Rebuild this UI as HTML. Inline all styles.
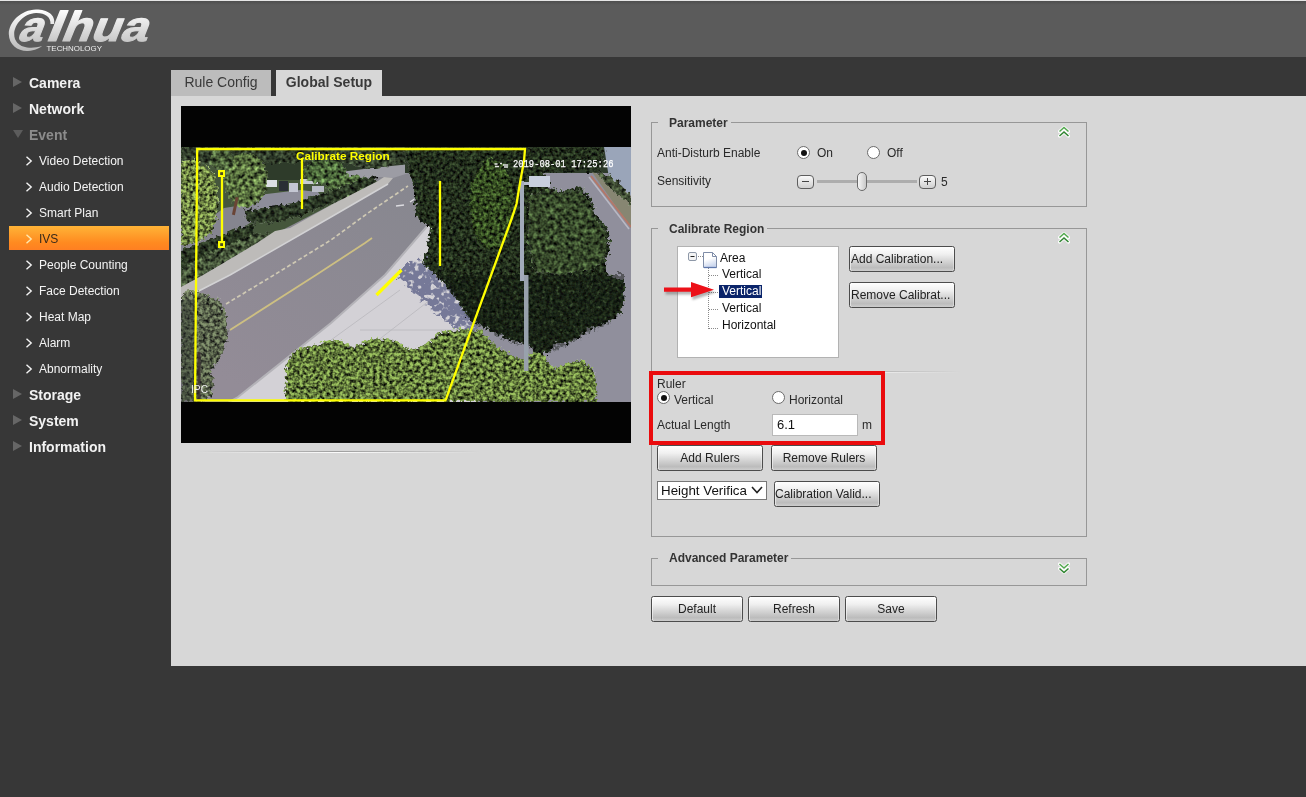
<!DOCTYPE html>
<html><head><meta charset="utf-8">
<style>
*{box-sizing:border-box;margin:0;padding:0}
html,body{width:1306px;height:797px;overflow:hidden;background:#373737;font-family:"Liberation Sans",sans-serif;font-size:12px;color:#222}
#hdr{position:absolute;left:0;top:0;width:1306px;height:57px;background:linear-gradient(#4e4e4e,#5b5b5b 4px);border-top:1px solid #e6e6e6}
#side{position:absolute;left:0;top:57px;width:171px;height:740px;background:#373737}
.m1{position:absolute;left:29px;font-size:14px;font-weight:bold;color:#f2f2f2;line-height:16px;white-space:nowrap}
.m1.dim{color:#8c8c8c}
.tri{position:absolute;left:13px;width:0;height:0;border-left:9px solid #666;border-top:5.5px solid transparent;border-bottom:5.5px solid transparent}
.trid{position:absolute;left:12.500px;width:0;height:0;border-top:8px solid #5c5c5c;border-left:5px solid transparent;border-right:5px solid transparent}
.m2{position:absolute;left:39px;font-size:12px;color:#f4f4f4;line-height:14px;white-space:nowrap}
.chev{position:absolute;left:25px;width:8px;height:10px}
#ivs{position:absolute;left:9px;top:169px;width:160px;height:24px;background:linear-gradient(#ffb437,#ff8a20 70%,#ff7f22)}
#content{position:absolute;left:171px;top:96px;width:1135px;height:570px;background:#d7d7d7}
.tab{position:absolute;top:70px;height:26px;font-size:15px;line-height:25px;text-align:center;color:#3a3a3a}
#video{position:absolute;left:181px;top:106px;width:450px;height:337px;background:#030303}
fieldset{position:absolute;border:1px solid #a9a9a9}
.leg{position:absolute;font-weight:bold;font-size:12px;color:#333;background:#d7d7d7;padding:0 3px 0 11px;line-height:14px;white-space:nowrap}
.lbl{position:absolute;font-size:12px;color:#2a2a2a;line-height:14px;white-space:nowrap}
.btn{position:absolute;height:25px;border:1px solid #4c4c4c;border-radius:2.5px;background:linear-gradient(#fefefe 0%,#f0f0f0 30%,#d8d8d8 55%,#bcbcbc 86%,#cdcdcd 100%);box-shadow:inset 1px 0 0 rgba(255,255,255,.55),inset -1px 0 0 rgba(255,255,255,.35);font-size:12px;line-height:24px;text-align:center;color:#222;white-space:nowrap;overflow:hidden}
.radio{position:absolute;width:13px;height:13px;border-radius:50%;border:1px solid #6b6b6b;background:#fff}
.radio.on:after{content:"";position:absolute;left:2.5px;top:2.5px;width:6px;height:6px;border-radius:50%;background:#111}

.fs{position:absolute;border:1px solid #979797}
.sbtn{position:absolute;width:17px;height:14px;border:1px solid #5e5e5e;border-radius:4px;background:linear-gradient(#fafafa,#cfcfcf)}
.sbtn i{position:absolute;background:#444}
.dchev{position:absolute}
.tl{position:absolute;font-size:12px;line-height:14px;color:#111;white-space:nowrap}
#wrap{position:absolute;left:0;top:0;width:1306px;height:797px;will-change:transform}
.hr{position:absolute;height:1px;background:linear-gradient(90deg,rgba(160,160,160,0),rgba(160,160,160,1) 50%,rgba(160,160,160,0))}
.hr.w{background:linear-gradient(90deg,rgba(255,255,255,0),rgba(255,255,255,.9) 50%,rgba(255,255,255,0))}
</style></head><body><div id="wrap">
<div id="hdr"><svg style="position:absolute;left:0;top:-1px" width="200" height="57" viewBox="0 0 200 57">
<defs>
<linearGradient id="lg2" gradientUnits="userSpaceOnUse" x1="0" y1="9" x2="0" y2="51"><stop offset="0" stop-color="#ffffff"/><stop offset="1" stop-color="#b9b9b9"/></linearGradient>
<linearGradient id="lg3" gradientUnits="userSpaceOnUse" x1="0" y1="-32" x2="0" y2="8"><stop offset="0" stop-color="#ffffff"/><stop offset="1" stop-color="#bcbcbc"/></linearGradient>
</defs>
<path fill="url(#lg2)" d="M54 24 C56 15 47 9.500 36 9.600 C21 10 9 22 8.800 34 C9 45 18 51.500 28 51 C35 50.500 40 48 42 46 C37 47.500 32 48 27 47.400 C19 46.500 14 41 14.200 34 C14.500 24 24 13.500 36 13 C45 12.800 51 17 50.500 24 Z"/>
<g transform="translate(0,40.600) skewX(-22)" font-family="'Liberation Sans',sans-serif" font-weight="bold" font-size="42" fill="url(#lg3)" stroke="url(#lg3)" stroke-width="1.100" stroke-linejoin="round">
<text x="16.500" y="0" textLength="24" lengthAdjust="spacingAndGlyphs">a</text>
<text x="44.500" y="0" textLength="15" lengthAdjust="spacingAndGlyphs">l</text>
<text x="59.500" y="0" textLength="86" lengthAdjust="spacingAndGlyphs">hua</text>
</g>
<text x="46.500" y="50.600" font-family="'Liberation Sans',sans-serif" font-size="8" fill="#eeeeee" textLength="55.500" lengthAdjust="spacingAndGlyphs">TECHNOLOGY</text>
</svg></div>
<div id="side">
  <div class="tri" style="top:20px"></div><div class="m1" style="top:18px">Camera</div>
  <div class="tri" style="top:46px"></div><div class="m1" style="top:44px">Network</div>
  <div class="trid" style="top:73px"></div><div class="m1 dim" style="top:70px">Event</div>
  <svg class="chev" style="top:99px" width="8" height="10" viewBox="0 0 8 10"><path d="M1.500 0.800 L6.200 5 L1.500 9.200" fill="none" stroke="#f4f4f4" stroke-width="1.400"/></svg><div class="m2" style="top:97px">Video Detection</div>
  <svg class="chev" style="top:125px" width="8" height="10" viewBox="0 0 8 10"><path d="M1.500 0.800 L6.200 5 L1.500 9.200" fill="none" stroke="#f4f4f4" stroke-width="1.400"/></svg><div class="m2" style="top:123px">Audio Detection</div>
  <svg class="chev" style="top:151px" width="8" height="10" viewBox="0 0 8 10"><path d="M1.500 0.800 L6.200 5 L1.500 9.200" fill="none" stroke="#f4f4f4" stroke-width="1.400"/></svg><div class="m2" style="top:149px">Smart Plan</div>
  <div id="ivs"></div>
  <svg class="chev" style="top:177px" width="8" height="10" viewBox="0 0 8 10"><path d="M1.500 0.800 L6.200 5 L1.500 9.200" fill="none" stroke="#ffe9b0" stroke-width="1.400"/></svg><div class="m2" style="top:175px;color:#3a2a1a">IVS</div>
  <svg class="chev" style="top:203px" width="8" height="10" viewBox="0 0 8 10"><path d="M1.500 0.800 L6.200 5 L1.500 9.200" fill="none" stroke="#f4f4f4" stroke-width="1.400"/></svg><div class="m2" style="top:201px">People Counting</div>
  <svg class="chev" style="top:229px" width="8" height="10" viewBox="0 0 8 10"><path d="M1.500 0.800 L6.200 5 L1.500 9.200" fill="none" stroke="#f4f4f4" stroke-width="1.400"/></svg><div class="m2" style="top:227px">Face Detection</div>
  <svg class="chev" style="top:255px" width="8" height="10" viewBox="0 0 8 10"><path d="M1.500 0.800 L6.200 5 L1.500 9.200" fill="none" stroke="#f4f4f4" stroke-width="1.400"/></svg><div class="m2" style="top:253px">Heat Map</div>
  <svg class="chev" style="top:281px" width="8" height="10" viewBox="0 0 8 10"><path d="M1.500 0.800 L6.200 5 L1.500 9.200" fill="none" stroke="#f4f4f4" stroke-width="1.400"/></svg><div class="m2" style="top:279px">Alarm</div>
  <svg class="chev" style="top:307px" width="8" height="10" viewBox="0 0 8 10"><path d="M1.500 0.800 L6.200 5 L1.500 9.200" fill="none" stroke="#f4f4f4" stroke-width="1.400"/></svg><div class="m2" style="top:305px">Abnormality</div>
  <div class="tri" style="top:332px"></div><div class="m1" style="top:330px">Storage</div>
  <div class="tri" style="top:358px"></div><div class="m1" style="top:356px">System</div>
  <div class="tri" style="top:384px"></div><div class="m1" style="top:382px">Information</div>
</div>
<div class="tab" style="left:171px;width:100px;background:#bcbcbc;font-size:14px">Rule Config</div>
<div class="tab" style="left:276px;width:106px;background:#d7d7d7;font-weight:bold;font-size:14px">Global Setup</div>
<div id="content"></div>
<div id="video"></div>
<!--SCENE--><svg id="vid" style="position:absolute;left:181px;top:106px" width="450" height="337" viewBox="181 106 450 337">
<defs>
<clipPath id="imgclip"><rect x="181" y="147" width="450" height="255"/></clipPath>
<filter id="fol" x="-5%" y="-5%" width="110%" height="110%" color-interpolation-filters="sRGB">
 <feTurbulence type="fractalNoise" baseFrequency="0.24" numOctaves="2" seed="7" result="t"/>
 <feColorMatrix in="t" type="matrix" values="1.5 0 0 0 -0.25  1.5 0 0 0 -0.25  1.5 0 0 0 -0.25  0 0 0 0 1" result="g"/>
 <feDisplacementMap in="SourceGraphic" in2="t" scale="8" xChannelSelector="R" yChannelSelector="G" result="d"/>
 <feBlend in="g" in2="d" mode="overlay" result="b"/>
 <feComposite in="b" in2="d" operator="in"/>
</filter>
<filter id="fol2" x="-5%" y="-5%" width="110%" height="110%" color-interpolation-filters="sRGB">
 <feTurbulence type="fractalNoise" baseFrequency="0.3" numOctaves="2" seed="21" result="t"/>
 <feColorMatrix in="t" type="matrix" values="0 1.7 0 0 -0.35  0 1.7 0 0 -0.35  0 1.7 0 0 -0.35  0 0 0 0 1" result="g"/>
 <feDisplacementMap in="SourceGraphic" in2="t" scale="9" xChannelSelector="R" yChannelSelector="G" result="d"/>
 <feBlend in="g" in2="d" mode="overlay" result="b"/>
 <feComposite in="b" in2="d" operator="in"/>
</filter>
<filter id="folm" x="-5%" y="-5%" width="110%" height="110%" color-interpolation-filters="sRGB">
 <feTurbulence type="fractalNoise" baseFrequency="0.3" numOctaves="2" seed="21" result="t"/>
 <feColorMatrix in="t" type="matrix" values="0 2.0 0 0 -0.38  0 2.0 0 0 -0.38  0 2.0 0 0 -0.38  0 0 0 0 1" result="g"/>
 <feDisplacementMap in="SourceGraphic" in2="t" scale="9" xChannelSelector="R" yChannelSelector="G" result="d"/>
 <feBlend in="g" in2="d" mode="multiply" result="b"/>
 <feComposite in="b" in2="d" operator="in"/>
</filter>
<filter id="dap" x="-10%" y="-10%" width="120%" height="120%" color-interpolation-filters="sRGB">
 <feTurbulence type="fractalNoise" baseFrequency="0.2" numOctaves="2" seed="4" result="t"/>
 <feColorMatrix in="t" type="matrix" values="0 0 0 0 0  0 0 0 0 0  0 0 0 0 0  0 7 0 0 -2.1" result="a"/>
 <feDisplacementMap in="SourceGraphic" in2="t" scale="14" xChannelSelector="R" yChannelSelector="G" result="d"/>
 <feComposite in="d" in2="a" operator="in"/>
</filter>
<linearGradient id="roadg" gradientUnits="userSpaceOnUse" x1="400" y1="170" x2="240" y2="390"><stop offset="0" stop-color="#87878f"/><stop offset="1" stop-color="#938c97"/></linearGradient>
<filter id="soft"><feGaussianBlur stdDeviation="0.6"/></filter>
</defs>
<rect x="181" y="106" width="450" height="337" fill="#030303"/>
<g clip-path="url(#imgclip)"><g filter="url(#soft)">
 <!-- road base -->
 <rect x="181" y="147" width="450" height="255" fill="url(#roadg)"/>
 <!-- upper-left background greenery -->
 <polygon points="181,147 420,147 420,163 398,165 372,168 340,172 336,178 378,181 331,205 257,243 205,274 181,288" fill="#44573a"/>
 <!-- parking lot patches -->
 <polygon points="250,196 300,190 318,192 322,198 300,206 262,214 244,213" fill="#8d8d9a"/>
 <polygon points="181,226 205,222 224,208 250,204 262,214 240,230 222,236 205,246 181,254" fill="#85858f"/>
 <polygon points="336,172 372,167 398,164 412,164 412,172 393,178 384,177 345,178" fill="#9c9ca4"/>
 <polygon points="256,152 420,150 420,163 372,168 340,172 318,178 300,180 258,180" fill="#2f3a2a"/>
 <!-- cars -->
 <g filter="url(#soft)">
 <rect x="266" y="180" width="11" height="7" fill="#dcdee4"/>
 <rect x="289" y="183" width="9" height="9" fill="#c4c7d3"/>
 <rect x="279" y="181" width="9" height="10" fill="#2c2f36"/>
 <rect x="300" y="179" width="18" height="5" fill="#c9ccd2"/>
 <rect x="312" y="186" width="12" height="6" fill="#b9bcc6"/>
 <rect x="184" y="189" width="14" height="3" fill="#c9ccd2"/>
 <rect x="352" y="160" width="14" height="4" fill="#b5b8c0"/>
 </g>
 <g filter="url(#fol)">
  <rect x="181" y="147" width="240" height="16" fill="#303c2a"/>
  <ellipse cx="246" cy="180" rx="22" ry="27" fill="#566d3d"/>
  <ellipse cx="222" cy="160" rx="12" ry="11" fill="#465a36"/>
  <ellipse cx="350" cy="186" rx="24" ry="11" fill="#4f6a3c"/>
  <ellipse cx="325" cy="172" rx="22" ry="12" fill="#486338"/>
  <ellipse cx="372" cy="160" rx="26" ry="8" fill="#36432f"/>
 </g>
 <polygon filter="url(#folm)" points="181,163 192,160 205,165 214,175 218,195 217,215 212,232 200,242 181,246" fill="#a9cb68"/>
 <rect x="234" y="197" width="3" height="18" fill="#6a4436" transform="rotate(12 235 205)"/>
 <!-- hedges -->
 <g filter="url(#fol)">
 <polygon points="243,210 262,208 292,203 331,190 372,176 380,182 331,204 300,216 270,224 248,222" fill="#2a3624"/>
 <polygon points="181,250 205,242 235,229 255,224 253,237 225,250 200,262 181,270" fill="#293522"/>
 <polygon points="181,268 215,250 255,234 272,232 258,244 205,274 181,288" fill="#435238"/>
 </g>
 <!-- left sidewalk -->
 <polygon points="181,287 205,274 257,243 275,231 290,228 331,205 378,181 384,177 393,178 388,184 331,217 230,275 181,301" fill="#bdbbb9"/>
 <polyline points="181,300 230,275 331,217 388,184" fill="none" stroke="#d2d2d4" stroke-width="1.500"/>
 <!-- lane markings -->
 <polyline points="226,304 274,275 331,240 368,213 408,186" fill="none" stroke="#cfc9b4" stroke-width="1.700" stroke-dasharray="4 2.500"/>
 <polyline points="230,330 316,275 365,243 372,238" fill="none" stroke="#cdbf82" stroke-width="1.800"/>
 <path d="M396 206 l8 -1 M410 202 l6 -4" stroke="#dcdce0" stroke-width="1.500"/>
 <!-- right sidewalk -->
 <polygon points="431,222 478,222 478,402 228,402 238,397 331,323 385,275 427,226" fill="#d3d1d6"/>
 <polyline points="229,402 238,397 331,323 385,275 429,224" fill="none" stroke="#b4b3b8" stroke-width="2"/>
 <path d="M331 340 L400 290 M360 330 H460 M300 352 H420 M350 362 L430 300" stroke="#b9b7bc" stroke-width="0.800" fill="none"/>
 <!-- shadow on sidewalk -->
 <polygon filter="url(#dap)" points="398,270 425,256 481,256 481,334 460,331 441,318 425,303 410,288 400,279" fill="#6c7092" opacity="0.9"/>
 <!-- right parking lot -->
 <rect x="478" y="172" width="153" height="230" fill="#908f9c"/>
 <!-- top-right: building, landscaping -->
 <rect x="405" y="147" width="226" height="26" fill="#2f3a29"/>
 <polygon points="604,147 631,147 631,196 609,178" fill="#9aa5b9"/>
 <polygon points="592,172 609,178 631,196 631,228" fill="#878672"/>
 <polygon filter="url(#fol)" points="596,172 612,176 622,186 631,196 631,205 610,188" fill="#3d4a32"/>
 <polyline points="591,176 631,227" fill="none" stroke="#b47868" stroke-width="2"/>
 <polyline points="589,177 629,229" fill="none" stroke="#b9b9c4" stroke-width="1.500"/>
 <!-- trees -->
 <g filter="url(#fol2)">
 <polygon points="405,147 408,165 414,190 416,218 430,227 427,252 422,264 436,275 450,290 470,320 481,326 510,340 530,346 535,353 548,353 555,343 569,343 579,337 587,330 608,322 621,314 624,299 624,280 608,275 605,262 610,249 608,230 595,213 592,199 579,186 562,192 549,187 549,176 540,172 600,172 605,147" fill="#222e1c"/>
 <ellipse cx="492" cy="205" rx="22" ry="45" fill="#324820"/>
 </g>
 <g filter="url(#fol)">
 <polygon points="530,196 548,190 562,194 579,190 590,202 594,216 606,232 607,250 602,262 590,270 560,275 535,270 528,240" fill="#36482a"/>
 </g>
 <polygon filter="url(#dap)" points="440,275 624,275 624,300 610,322 580,338 550,352 530,348 500,338 470,320" fill="#0c140c" opacity="0.450"/>
 <!-- bushes -->
 <g filter="url(#folm)">
 <polygon points="285,402 286,366 292,352 300,348 310,346 322,343 331,340 340,341 352,347 360,344 375,338 395,340 410,350 425,345 440,332 462,329 481,330 497,347 522,360 535,352 543,353 554,369 570,362 582,360 595,371 597,402" fill="#9cc25e"/>
 </g>
 <!-- pole and light -->
 <rect x="520" y="181" width="4" height="100" fill="#a3abbb"/>
 <rect x="524" y="275" width="4.500" height="96" fill="#98a1ac"/>
 <rect x="524" y="182" width="6" height="3" fill="#b5bccb"/>
 <rect x="529" y="176" width="21" height="11" fill="#c9cfde"/>
 <!-- bottom-left tree -->
 <g filter="url(#folm)">
 <polygon points="181,294 190,290 205,294 220,301 226,315 228,335 224,350 218,362 210,370 214,382 212,395 205,402 181,402" fill="#75895a" opacity="0.900"/>
 </g>
 <rect x="181" y="300" width="15" height="102" fill="#2c3430" opacity="0.400"/>
 <rect x="197.500" y="352" width="3" height="50" fill="#3a2c32" opacity="0.800"/>
</g></g>
<!-- overlay -->
<g fill="none" stroke="#ffff00" stroke-width="2.300">
 <polygon points="197.200,149 525,149 524,161 520.500,180 516.500,204 511.500,219 445.500,400.400 195,400.400" stroke-linejoin="miter"/>
 <path d="M222 174 V244"/>
 <path d="M302 158 V209"/>
 <path d="M440 181 V266"/>
 <path d="M401.500 270 L376.500 295" stroke-width="3.200"/>
</g>
<g fill="#ffff00"><rect x="218" y="170" width="7" height="7"/><rect x="218" y="241" width="7" height="7"/></g>
<g fill="#4a4a24"><rect x="220.200" y="172.200" width="2.800" height="2.800"/><rect x="220.200" y="243.200" width="2.800" height="2.800"/></g>
<text x="296" y="159.600" font-family="'Liberation Sans',sans-serif" font-weight="bold" font-size="11.800" fill="#ffff00" textLength="93.700" lengthAdjust="spacingAndGlyphs">Calibrate Region</text>
<path d="M494.500 164 h3 M495 166.500 h4 M500 163.500 h2 M503 165 h5 M504 167 h4" stroke="#e4e4e4" stroke-width="1.300" fill="none"/>
<text x="513" y="167" font-family="'Liberation Mono','DejaVu Sans Mono',monospace" font-size="10.500" fill="#ffffff" stroke="#ffffff" stroke-width="0.250" textLength="100.500" lengthAdjust="spacingAndGlyphs">2019-08-01 17:25:26</text>
<text x="191" y="392.500" font-family="'Liberation Sans',sans-serif" font-size="10.500" fill="#f0f0f0" textLength="17" lengthAdjust="spacingAndGlyphs">IPC</text>
</svg>
<!--/SCENE-->
<div class="hr" style="left:196px;top:451px;width:284px"></div><div class="hr w" style="left:196px;top:452px;width:284px"></div>
<div class="hr" style="left:657px;top:371px;width:304px"></div><div class="hr w" style="left:657px;top:372px;width:304px"></div>
<!-- right panel -->
<div id="panel">
<div class="fs" style="left:651px;top:122px;width:436px;height:85px"></div>
<div class="leg" style="left:658px;top:116px">Parameter</div>
<div class="lbl" style="left:657px;top:146px">Anti-Disturb Enable</div>
<div class="radio on" style="left:797px;top:146px"></div><div class="lbl" style="left:817px;top:146px">On</div>
<div class="radio" style="left:867px;top:146px"></div><div class="lbl" style="left:887px;top:146px">Off</div>
<div class="lbl" style="left:657px;top:174px">Sensitivity</div>
<div class="sbtn" style="left:797px;top:175px"><i style="left:4px;top:5px;width:7px;height:1px"></i></div>
<div style="position:absolute;left:817px;top:180px;width:100px;height:3px;background:#adadad"></div>
<div style="position:absolute;left:857px;top:172px;width:10px;height:19px;border:1px solid #6a6a6a;border-radius:5px;background:linear-gradient(90deg,#f6f6f6,#c8c8c8)"></div>
<div class="sbtn" style="left:919px;top:175px"><i style="left:4px;top:5px;width:7px;height:1px"></i><i style="left:7px;top:2px;width:1px;height:7px"></i></div>
<div class="lbl" style="left:941px;top:175px">5</div>
<svg class="dchev" style="left:1057.500px;top:126px" width="12" height="12" viewBox="0 0 12 12"><path d="M1.500 5.500 L6 1.500 L10.500 5.500 M1.500 10 L6 6 L10.500 10" fill="none" stroke="#fff" stroke-width="3.200" stroke-linecap="round" opacity="0.900"/><path d="M1.500 5.500 L6 1.500 L10.500 5.500" fill="none" stroke="#52a84e" stroke-width="1.500"/><path d="M1.500 10 L6 6 L10.500 10" fill="none" stroke="#2f8530" stroke-width="1.500"/></svg>

<div class="fs" style="left:651px;top:228px;width:436px;height:309px"></div>
<div class="leg" style="left:658px;top:222px">Calibrate Region</div>
<svg class="dchev" style="left:1057.500px;top:232px" width="12" height="12" viewBox="0 0 12 12"><path d="M1.500 5.500 L6 1.500 L10.500 5.500 M1.500 10 L6 6 L10.500 10" fill="none" stroke="#fff" stroke-width="3.200" stroke-linecap="round" opacity="0.900"/><path d="M1.500 5.500 L6 1.500 L10.500 5.500" fill="none" stroke="#52a84e" stroke-width="1.500"/><path d="M1.500 10 L6 6 L10.500 10" fill="none" stroke="#2f8530" stroke-width="1.500"/></svg>
<div id="tree" style="position:absolute;left:677px;top:246px;width:162px;height:112px;background:#fff;border:1px solid #b2b2b2"></div>
<svg style="position:absolute;left:677px;top:246px" width="162" height="112" viewBox="677 246 162 112">
<defs><linearGradient id="pgg" x1="0" y1="0" x2="0.300" y2="1"><stop offset="0.500" stop-color="#ffffff"/><stop offset="1" stop-color="#cdd8ee"/></linearGradient></defs>
<g stroke="#8a8a8a" stroke-width="1" stroke-dasharray="1 1" fill="none">
<path d="M698 256.500 H703 M708.500 268 V329 M709 275.500 H719 M709 292.500 H719 M709 309.500 H719 M709 328.500 H719"/>
</g>
<rect x="688.5" y="252.500" width="8" height="8" rx="1.500" fill="#f4f4f4" stroke="#8e98a8"/>
<path d="M690.5 256.500 H694.5" stroke="#222" stroke-width="1"/>
<path d="M703.500 252.500 H712.500 L716.500 256.500 V267.500 H703.500 Z" fill="url(#pgg)" stroke="#7f8da8"/>
<path d="M712.500 252.500 V256.500 H716.500" fill="none" stroke="#7f8da8"/>
<path d="M704 267.500 H716.500" stroke="#5f78ad" stroke-width="1.300"/>
<rect x="719" y="285" width="43" height="13" fill="#0a246a"/>
</svg>
<div class="tl" style="left:720px;top:251px">Area</div>
<div class="tl" style="left:722px;top:267px">Vertical</div>
<div class="tl" style="left:722px;top:284px;color:#fff">Vertical</div>
<div class="tl" style="left:722px;top:301px">Vertical</div>
<div class="tl" style="left:722px;top:318px">Horizontal</div>
<svg style="position:absolute;left:655px;top:275px" width="70" height="32" viewBox="655 275 70 32">
<defs><filter id="ash" x="-20%" y="-30%" width="140%" height="180%"><feGaussianBlur stdDeviation="1.3"/></filter></defs>
<path d="M664 288 H691 V282.500 L714 290 L691 297.500 V292 H664 Z" fill="#555" opacity="0.450" filter="url(#ash)" transform="translate(1.5,2.500)"/>
<path d="M664 287.500 H691 V282 L714 289.700 L691 297.200 V291.800 H664 Z" fill="#ec1119"/>
</svg>
<div class="btn" style="left:849px;top:246px;width:106px;height:26px;text-align:left;padding-left:1px">Add Calibration...</div>
<div class="btn" style="left:849px;top:282px;width:106px;height:26px;text-align:left;padding-left:1px">Remove Calibrat...</div>

<div style="position:absolute;left:649px;top:371px;width:236px;height:74px;border:4px solid #ea0b0d;z-index:5"></div>
<div class="lbl" style="left:657px;top:377px">Ruler</div>
<div class="radio on" style="left:657px;top:391px"></div><div class="lbl" style="left:674px;top:393px">Vertical</div>
<div class="radio" style="left:772px;top:391px"></div><div class="lbl" style="left:789px;top:393px">Horizontal</div>
<div class="lbl" style="left:657px;top:418px">Actual Length</div>
<div style="position:absolute;left:772px;top:414px;width:86px;height:22px;background:#fff;border:1px solid #b9b9b9;font-size:13px;line-height:20px;padding-left:4px;color:#111">6.1</div>
<div class="lbl" style="left:862px;top:418px">m</div>
<div class="btn" style="left:657px;top:445px;width:106px;height:26px">Add Rulers</div>
<div class="btn" style="left:771px;top:445px;width:106px;height:26px">Remove Rulers</div>
<div style="position:absolute;left:657px;top:481px;width:110px;height:19px;background:#fff;border:1px solid #777;font-size:13.33px;line-height:17px;padding-left:3px;color:#111;white-space:nowrap;overflow:hidden">Height Verifica</div>
<svg style="position:absolute;left:751px;top:485px" width="12" height="10" viewBox="0 0 12 10"><rect x="-2" y="-2" width="16" height="14" fill="#fff"/><path d="M1 2 L6 7.5 L11 2" fill="none" stroke="#222" stroke-width="1.6"/></svg>
<div class="btn" style="left:774px;top:481px;width:106px;height:26px;text-align:left;padding-left:0">Calibration Valid...</div>

<div class="fs" style="left:651px;top:558px;width:436px;height:28px"></div>
<div class="leg" style="left:658px;top:551px">Advanced Parameter</div>
<svg class="dchev" style="left:1057.500px;top:562px" width="12" height="12" viewBox="0 0 12 12"><path d="M1.500 2 L6 6 L10.500 2 M1.500 6.500 L6 10.500 L10.500 6.500" fill="none" stroke="#fff" stroke-width="3.200" stroke-linecap="round" opacity="0.900"/><path d="M1.500 2 L6 6 L10.500 2" fill="none" stroke="#52a84e" stroke-width="1.500"/><path d="M1.500 6.500 L6 10.500 L10.500 6.500" fill="none" stroke="#2f8530" stroke-width="1.500"/></svg>
<div class="btn" style="left:651px;top:596px;width:92px;height:26px">Default</div>
<div class="btn" style="left:748px;top:596px;width:92px;height:26px">Refresh</div>
<div class="btn" style="left:845px;top:596px;width:92px;height:26px">Save</div>
</div>

</div></body></html>
